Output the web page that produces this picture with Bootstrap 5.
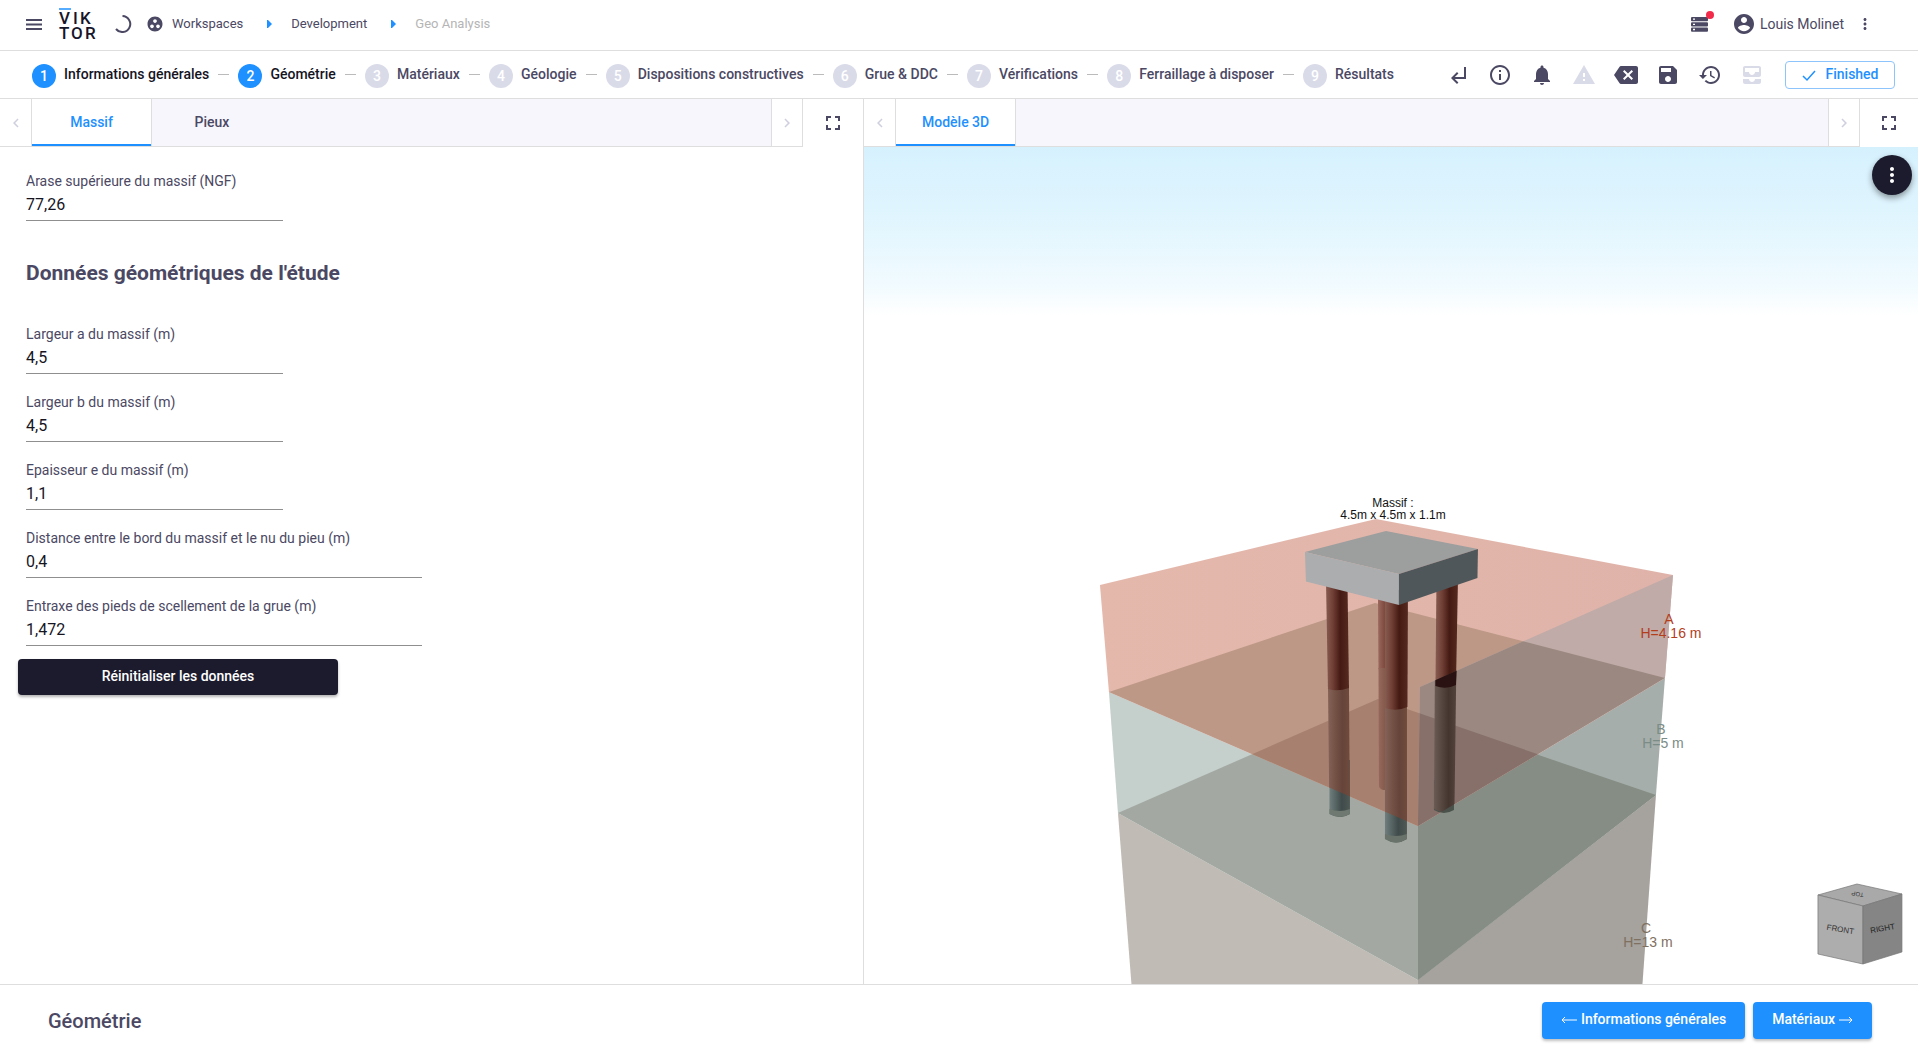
<!DOCTYPE html>
<html lang="fr">
<head>
<meta charset="utf-8">
<meta name="viewport" content="width=device-width, initial-scale=1">
<title>Geo Analysis</title>
<link href="https://cdn.jsdelivr.net/npm/bootstrap@5.3.0/dist/css/bootstrap.min.css" rel="stylesheet">
<style>
:root{--ink:#4b4863;--dark:#1c1b2e;--blue:#1e90ff;--rule:#dedede;--mute:#dadbe9;--tint:#f7f6fd}
body{font-family:Roboto,"Liberation Sans",sans-serif;font-size:14px;line-height:20px;color:var(--ink);background:#fff}
svg{flex:none;display:block}
.ic{width:24px;height:24px;fill:currentColor}
.ic-sm{width:18px;height:18px;fill:currentColor}
.plain{border:0;background:none;padding:0;color:inherit;display:flex;align-items:center;justify-content:center}
.plain:disabled{color:var(--mute)}
.topbar{height:51px;border-bottom:1px solid var(--rule);padding:0 44px 2px 25px}
.crumbs{font-size:13px;margin-left:13px}
.crumbs a{color:var(--ink);text-decoration:none}
.crumbs .current{color:#b5b5b5}
.crumb-sep{margin:0 19px 0 24px}
.user-link{color:inherit;text-decoration:none;margin-right:12px}
.alert-dot{width:8px;height:8px;background:#f22b4b;top:-6px;right:-6px}
.stepbar{height:48px;border-bottom:1px solid var(--rule);padding:0 23px 0 32px}
.steps{flex:0 1 1362px}
.steps a{color:var(--ink);text-decoration:none;font-weight:500;white-space:nowrap;margin-bottom:2px}
.steps .num{width:24px;height:24px;border-radius:50%;background:var(--mute);color:#fff;display:flex;align-items:center;justify-content:center;font-size:14px;margin-top:4px}
.steps .done .num{background:var(--blue)}
.steps .done{color:#15141f}
.steps .dash{width:11px;height:1px;background:#bbb}
.tools{gap:18px}
.btn-finish{width:110px;height:28px;padding:0;margin-left:3px;border:1px solid #8dc4fb;border-radius:4px;color:var(--blue);font-weight:500;font-size:14px}
.left-pane{flex:0 0 calc(45% + 1px);border-right:1px solid var(--rule)}
.right-pane{flex:1 1 0;min-width:0}
.tabbar{height:48px}
.tabbar .arrow{width:32px;border-right:1px solid var(--rule);border-bottom:1px solid var(--rule);color:#cfcfe0}
.tabbar .arrow.next{border-left:1px solid var(--rule)}
.tabbar .expand{width:60px}
.right-pane .expand{width:58px}
.tabstrip{background:var(--tint);border-bottom:1px solid var(--rule)}
.tabstrip a{width:120px;display:flex;align-items:center;justify-content:center;color:var(--ink);font-weight:500;text-decoration:none;padding-bottom:1px}
.tabstrip a.active{background:#fff;color:var(--blue);border-right:1px solid var(--rule);box-shadow:inset 0 -2px var(--blue)}
.form-area{padding:24px 26px}
.field{max-width:257px;height:50px;border-bottom:1px solid #8f8f8f;margin-bottom:18px}
.field.wide{max-width:396px}
.field label{display:block;line-height:20px}
.field input{display:block;width:100%;border:0;outline:0;padding:0;height:26px;font-size:16px;color:#16151f;background:none}
.section-title{font-size:21px;line-height:24px;font-weight:700;margin:0 0 39px;padding-top:22px}
.btn-reset{width:320px;height:36px;padding:0 0 2px;margin:-5px 0 0 -8px;border-radius:4px;background:var(--dark);color:#fff;font-weight:500;font-size:14px;box-shadow:0 2px 3px rgba(0,0,0,.3)}
.btn-reset:hover{background:#2c2b42;color:#fff}
.viewer{background:linear-gradient(#d6f1fe 0,#e0f5fe 70px,#f2fbff 140px,#fff 168px)}
.fab{top:8px;right:6px;width:40px;height:40px;border-radius:50%;background:var(--dark);color:#fff;box-shadow:0 3px 6px rgba(0,0,0,.4)}
.scene{width:100%;height:100%;position:absolute;inset:0}
.scene text{font-family:"Liberation Sans",Arial,sans-serif;text-anchor:middle}
.footbar{height:70px;border-top:1px solid var(--rule);padding:6px 46px 4px 48px}
.footbar h2{font-size:20px;line-height:24px;font-weight:500}
.btn-step{height:37px;padding:0 18px 2px;border-radius:4px;background:var(--blue);color:#fff;font-weight:500;font-size:14px;box-shadow:0 2px 3px rgba(0,0,0,.25)}
.btn-step:hover{background:#1580ea;color:#fff}
</style>
</head>
<body class="d-flex flex-column vh-100 overflow-hidden">
<header class="topbar d-flex align-items-center">
  <button class="plain" aria-label="Menu"><svg width="18" height="12" viewBox="0 0 18 12" fill="#4b4863"><path d="M1 1h16v2H1zM1 5.500h16v2H1zM1 10h16v2H1z"/></svg></button>
  <a href="#" class="ms-3" aria-label="VIKTOR"><svg width="40" height="38" viewBox="0 0 40 38">
    <g font-family="Roboto, sans-serif" font-size="17" font-weight="500" fill="#16152a"><text x="0 14 21" y="19">VIK</text><text x="0 12 26" y="34">TOR</text></g>
    <path d="M0 4h12" stroke="#1e90ff" stroke-width="1.500"/></svg></a>
  <svg class="ms-3" width="18" height="18" viewBox="0 0 18 18" fill="none" stroke="#4b4863" stroke-width="2" role="status"><path d="M7.500 1A8 8 0 1 1 1 14"/></svg>
  <nav class="crumbs d-flex align-items-center" aria-label="Fil d'Ariane">
    <a href="#" class="d-flex align-items-center gap-2"><svg class="ic-sm" viewBox="0 0 24 24"><path d="M12 2C6.480 2 2 6.480 2 12s4.480 10 10 10 10-4.480 10-10S17.520 2 12 2zM8 17.500c-1.380 0-2.500-1.120-2.500-2.500s1.120-2.500 2.500-2.500 2.500 1.120 2.500 2.500-1.120 2.500-2.500 2.500zM9.500 8c0-1.380 1.120-2.500 2.500-2.500s2.500 1.120 2.500 2.500-1.120 2.500-2.500 2.500S9.500 9.380 9.500 8zm6.500 9.500c-1.380 0-2.500-1.120-2.500-2.500s1.120-2.500 2.500-2.500 2.500 1.120 2.500 2.500-1.120 2.500-2.500 2.500z"/></svg>Workspaces</a>
    <svg class="crumb-sep" width="5" height="8" viewBox="0 0 5 8"><path d="M0 0h1l4 4-4 4H0z" fill="#1e90ff"/></svg>
    <a href="#">Development</a>
    <svg class="crumb-sep" width="5" height="8" viewBox="0 0 5 8"><path d="M0 0h1l4 4-4 4H0z" fill="#1e90ff"/></svg>
    <span class="current">Geo Analysis</span>
  </nav>
  <div class="ms-auto d-flex align-items-center">
    <button class="plain position-relative me-4" aria-label="Tâches"><svg width="17" height="15" viewBox="0 0 17 15"><g fill="#4b4863"><rect width="17" height="4.300" rx="1"/><rect y="5.200" width="17" height="4.300" rx="1"/><rect y="10.400" width="17" height="4.300" rx="1"/></g><path d="M2 2.100h2M2 7.300h2M2 12.500h2" stroke="#fff" stroke-width="1.300"/></svg><span class="alert-dot rounded-circle position-absolute"></span></button>
    <a href="#" class="user-link d-flex align-items-center gap-1"><svg class="ic" viewBox="0 0 24 24"><path d="M12 2C6.480 2 2 6.480 2 12s4.480 10 10 10 10-4.480 10-10S17.520 2 12 2zm0 3c1.660 0 3 1.340 3 3s-1.340 3-3 3-3-1.340-3-3 1.340-3 3-3zm0 14.200c-2.500 0-4.710-1.280-6-3.220.03-1.990 4-3.080 6-3.080 1.990 0 5.970 1.090 6 3.080-1.290 1.940-3.500 3.220-6 3.220z"/></svg><span>Louis Molinet</span></a>
    <button class="plain" aria-label="Plus"><svg class="ic-sm" viewBox="0 0 24 24"><path d="M12 8c1.100 0 2-.9 2-2s-.9-2-2-2-2 .9-2 2 .9 2 2 2zm0 2c-1.100 0-2 .9-2 2s.9 2 2 2 2-.9 2-2-.9-2-2-2zm0 6c-1.100 0-2 .9-2 2s.9 2 2 2 2-.9 2-2-.9-2-2-2z"/></svg></button>
  </div>
</header>

<div class="stepbar d-flex align-items-center justify-content-between">
  <nav class="steps d-flex align-items-center justify-content-between" aria-label="Étapes">
    <a href="#" class="done d-flex align-items-center gap-2"><span class="num">1</span>Informations générales</a><span class="dash"></span>
    <a href="#" class="done d-flex align-items-center gap-2"><span class="num">2</span>Géométrie</a><span class="dash"></span>
    <a href="#" class="d-flex align-items-center gap-2"><span class="num">3</span>Matériaux</a><span class="dash"></span>
    <a href="#" class="d-flex align-items-center gap-2"><span class="num">4</span>Géologie</a><span class="dash"></span>
    <a href="#" class="d-flex align-items-center gap-2"><span class="num">5</span>Dispositions constructives</a><span class="dash"></span>
    <a href="#" class="d-flex align-items-center gap-2"><span class="num">6</span>Grue &amp; DDC</a><span class="dash"></span>
    <a href="#" class="d-flex align-items-center gap-2"><span class="num">7</span>Vérifications</a><span class="dash"></span>
    <a href="#" class="d-flex align-items-center gap-2"><span class="num">8</span>Ferraillage à disposer</a><span class="dash"></span>
    <a href="#" class="d-flex align-items-center gap-2"><span class="num">9</span>Résultats</a>
  </nav>
  <div class="tools d-flex align-items-center">
    <button class="plain" aria-label="Retour"><svg class="ic" viewBox="0 0 24 24"><path d="M11 9l1.420 1.420L8.830 14H18V4h2v12H8.830l3.590 3.580L11 21l-6-6 6-6z"/></svg></button>
    <button class="plain" aria-label="Informations"><svg class="ic" viewBox="0 0 24 24"><path d="M11 7h2v2h-2zm0 4h2v6h-2zm1-9C6.480 2 2 6.480 2 12s4.480 10 10 10 10-4.480 10-10S17.520 2 12 2zm0 18c-4.410 0-8-3.590-8-8s3.590-8 8-8 8 3.590 8 8-3.590 8-8 8z"/></svg></button>
    <button class="plain" aria-label="Notifications"><svg class="ic" viewBox="0 0 24 24"><path d="M12 22c1.100 0 2-.9 2-2h-4c0 1.100.89 2 2 2zm6-6v-5c0-3.070-1.640-5.640-4.500-6.320V4c0-.83-.67-1.500-1.500-1.500s-1.500.67-1.500 1.500v.68C7.630 5.360 6 7.920 6 11v5l-2 2v1h16v-1l-2-2z"/></svg></button>
    <button class="plain" disabled aria-label="Alertes"><svg class="ic" viewBox="0 0 24 24"><path d="M1 21h22L12 2 1 21zm12-3h-2v-2h2v2zm0-4h-2v-4h2v4z"/></svg></button>
    <button class="plain" aria-label="Effacer"><svg class="ic" viewBox="0 0 24 24"><path d="M22 3H7c-.69 0-1.230.35-1.590.88L0 12l5.410 8.110c.36.530.9.890 1.590.890h15c1.100 0 2-.9 2-2V5c0-1.100-.9-2-2-2zm-3 12.590L17.590 17 14 13.410 10.410 17 9 15.590 12.590 12 9 8.410 10.410 7 14 10.590 17.590 7 19 8.410 15.410 12 19 15.590z"/></svg></button>
    <button class="plain" aria-label="Enregistrer"><svg class="ic" viewBox="0 0 24 24"><path d="M17 3H5c-1.110 0-2 .9-2 2v14c0 1.100.89 2 2 2h14c1.100 0 2-.9 2-2V7l-4-4zm-5 16c-1.660 0-3-1.340-3-3s1.340-3 3-3 3 1.340 3 3-1.340 3-3 3zm3-10H5V5h10v4z"/></svg></button>
    <button class="plain" aria-label="Historique"><svg class="ic" viewBox="0 0 24 24"><path d="M13 3c-4.970 0-9 4.030-9 9H1l3.890 3.890.07.14L9 12H6c0-3.870 3.130-7 7-7s7 3.130 7 7-3.130 7-7 7c-1.930 0-3.680-.79-4.940-2.060l-1.420 1.420C8.270 19.990 10.510 21 13 21c4.970 0 9-4.030 9-9s-4.030-9-9-9zm-1 5v5l4.280 2.540.72-1.210-3.500-2.080V8H12z"/></svg></button>
    <button class="plain" disabled aria-label="Archives"><svg class="ic" viewBox="0 0 24 24"><path d="M19 3H5c-1.100 0-2 .9-2 2v7c0 1.100.9 2 2 2h14c1.100 0 2-.9 2-2V5c0-1.100-.9-2-2-2zm0 6h-4c0 1.620-1.380 3-3 3s-3-1.380-3-3H5V5h14v4zm-4 7h6v3c0 1.100-.9 2-2 2H5c-1.100 0-2-.9-2-2v-3h6c0 1.660 1.340 3 3 3s3-1.340 3-3z"/></svg></button>
    <button class="btn btn-finish d-flex align-items-center justify-content-center gap-2"><svg width="16" height="16" viewBox="0 0 16 16" fill="none" stroke="currentColor" stroke-width="1.500"><path d="M2 9l4 4 8-9"/></svg>Finished</button>
  </div>
</div>

<main class="d-flex flex-grow-1" style="min-height:0">
  <section class="left-pane d-flex flex-column">
    <div class="tabbar d-flex">
      <button class="plain arrow" aria-label="Précédent"><svg class="ic-sm" viewBox="0 0 24 24"><path d="M15.410 7.410L14 6l-6 6 6 6 1.410-1.410L10.830 12z"/></svg></button>
      <nav class="tabstrip d-flex flex-grow-1"><a href="#" class="active">Massif</a><a href="#">Pieux</a></nav>
      <button class="plain arrow next" aria-label="Suivant"><svg class="ic-sm" viewBox="0 0 24 24"><path d="M10 6L8.590 7.410 13.170 12l-4.580 4.590L10 18l6-6z"/></svg></button>
      <button class="plain expand" aria-label="Plein écran"><svg class="ic" viewBox="0 0 24 24"><path d="M7 14H5v5h5v-2H7v-3zm-2-4h2V7h3V5H5v5zm12 7h-3v2h5v-5h-2v3zM14 5v2h3v3h2V5h-5z"/></svg></button>
    </div>
    <form class="form-area overflow-auto flex-grow-1">
      <div class="field"><label for="arase">Arase supérieure du massif (NGF)</label><input id="arase" type="text" value="77,26"></div>
      <h3 class="section-title">Données géométriques de l'étude</h3>
      <div class="field"><label for="la">Largeur a du massif (m)</label><input id="la" type="text" value="4,5"></div>
      <div class="field"><label for="lb">Largeur b du massif (m)</label><input id="lb" type="text" value="4,5"></div>
      <div class="field"><label for="ep">Epaisseur e du massif (m)</label><input id="ep" type="text" value="1,1"></div>
      <div class="field wide"><label for="di">Distance entre le bord du massif et le nu du pieu (m)</label><input id="di" type="text" value="0,4"></div>
      <div class="field wide"><label for="en">Entraxe des pieds de scellement de la grue (m)</label><input id="en" type="text" value="1,472"></div>
      <button type="button" class="btn btn-reset">Réinitialiser les données</button>
    </form>
  </section>

  <section class="right-pane d-flex flex-column">
    <div class="tabbar d-flex">
      <button class="plain arrow" aria-label="Précédent"><svg class="ic-sm" viewBox="0 0 24 24"><path d="M15.410 7.410L14 6l-6 6 6 6 1.410-1.410L10.830 12z"/></svg></button>
      <nav class="tabstrip d-flex flex-grow-1"><a href="#" class="active">Modèle 3D</a></nav>
      <button class="plain arrow next" aria-label="Suivant"><svg class="ic-sm" viewBox="0 0 24 24"><path d="M10 6L8.590 7.410 13.170 12l-4.580 4.590L10 18l6-6z"/></svg></button>
      <button class="plain expand" aria-label="Plein écran"><svg class="ic" viewBox="0 0 24 24"><path d="M7 14H5v5h5v-2H7v-3zm-2-4h2V7h3V5H5v5zm12 7h-3v2h5v-5h-2v3zM14 5v2h3v3h2V5h-5z"/></svg></button>
    </div>
    <div class="viewer position-relative flex-grow-1 overflow-hidden">
      <svg class="scene" viewBox="864 147 1054 837" preserveAspectRatio="xMidYMax slice" role="img" aria-label="Modèle 3D du massif">
        <defs>
          <linearGradient id="pa"><stop offset="0" stop-color="#875c51"/><stop offset=".3" stop-color="#703f36"/><stop offset=".62" stop-color="#451a12"/><stop offset="1" stop-color="#552a20"/></linearGradient>
          <linearGradient id="pb"><stop offset="0" stop-color="#856257"/><stop offset=".35" stop-color="#745145"/><stop offset=".65" stop-color="#66443a"/><stop offset="1" stop-color="#6f4b3d"/></linearGradient>
          <linearGradient id="pc"><stop offset="0" stop-color="#6f7f7d"/><stop offset=".6" stop-color="#3f4b4a"/><stop offset="1" stop-color="#4f5955"/></linearGradient>
          <linearGradient id="pd"><stop offset="0" stop-color="#6a5c55"/><stop offset=".65" stop-color="#44352e"/><stop offset="1" stop-color="#53453e"/></linearGradient>
          <linearGradient id="pe"><stop offset="0" stop-color="#9c6a5f"/><stop offset=".7" stop-color="#7d483e"/></linearGradient>
          <linearGradient id="pf"><stop offset="0" stop-color="#96695b"/><stop offset="1" stop-color="#7c5345"/></linearGradient>
          <linearGradient id="ga" x1="0" x2="1"><stop offset="0" stop-color="#e5b8ac"/><stop offset="1" stop-color="#dfb3a9"/></linearGradient>
          <clipPath id="hullA"><path d="M1100 585L1376 519l297 56-8 103-247 148L1109 692z"/></clipPath>
          <clipPath id="floorA"><path d="M1109 692l266-89 290 75-247 148z"/></clipPath>
          <clipPath id="sideA"><path d="M1420 687l253-112-8 103-247 148z"/></clipPath>
        </defs>
        <path d="M1118 813l300 167v4h-286.500z" fill="#c1bbb5"/><path d="M1418 984v-4.500l238-184.500-13.500 189z" fill="#a6a29d"/>
        <path d="M1109 692l309 134v154L1118 813z" fill="#c5cfcc"/><path d="M1418 826l247-148-9 117-238 185z" fill="#a5aeab"/>
        <path d="M1118 813l260-114 40 15v266z" fill="#a3a9a2"/><path d="M1418 714l238 81-238 185z" fill="#868d84"/>
        <path d="M1100 585L1376 519l297 56-8 103-247 148L1109 692z" fill="url(#ga)"/>
        <path d="M1109 692l266-89 290 75-247 148z" fill="#bd9887"/>
        <path d="M1118 813l260-114 278 96-238 185z" fill="#a8806f" clip-path="url(#floorA)"/>
        <g clip-path="url(#sideA)"><path d="M1410 570h270v260h-270z" fill="#c0aba8"/><path d="M1109 692l266-89 290 75-247 148z" fill="#9b8981"/><path d="M1118 813l260-114 278 96-238 185z" fill="#87706a"/></g>
        <g>
          <path d="M1378 595h10v74h-9.500z" fill="url(#pe)"/><path d="M1378.500 668h10v122h-5q-4-1-4.500-4z" fill="url(#pf)"/>
          <path d="M1329.500 760h20.500v54q-10 6-20.500 0z" fill="url(#pc)"/><path d="M1329.500 809q10 4 20.500 0v5q-10 6-20.500 0z" fill="#6f7871"/>
          <path d="M1385 780h22v59q-11 7-22 0z" fill="url(#pc)"/><path d="M1385 834q11 4 22 0v5q-11 7-22 0z" fill="#6a736b"/>
          <path d="M1434 780h20v30q-10 6-20 0z" fill="#4a524b"/>
          <g clip-path="url(#hullA)">
            <path d="M1328 685h21l1 130h-20.500z" fill="url(#pb)"/><path d="M1385 700h22v140h-22z" fill="url(#pb)"/>
          </g>
          <path d="M1326 580h21.500l1.500 108q-11 4-21 1z" fill="url(#pa)"/>
          <path d="M1385 590h23l-.5 117q-11 5-22.500 1z" fill="url(#pa)"/>
          <path d="M1436.500 580h21.500l-2 105q-10 5-20.500 1z" fill="url(#pa)"/>
          <g clip-path="url(#sideA)"><path d="M1435 660h21.500l-2 149q-10 6-20.500 0z" fill="url(#pd)"/><path d="M1435.500 660h21.500l-1 25q-10 5-20.500 1z" fill="#2a1112"/></g>
        </g>
        <path d="M1305 552l81-21 92 18-79 25z" fill="#9d9e9e"/><path d="M1305 552l94 22v31l-93-23.500z" fill="#abadaf"/><path d="M1399 574l79-25-.5 29-78.500 27z" fill="#50575a"/>
        <g font-size="12" fill="#111"><text x="1393" y="507">Massif :</text><text x="1393" y="519">4.5m x 4.5m x 1.1m</text></g>
        <g font-size="14"><g fill="#b33e1c"><text x="1669" y="624">A</text><text x="1671" y="638">H=4.16 m</text></g>
        <g fill="#7b8c86"><text x="1661" y="734">B</text><text x="1663" y="748">H=5 m</text></g>
        <g fill="#7f7161"><text x="1646" y="933">C</text><text x="1648" y="947">H=13 m</text></g></g>
        <g stroke="#777" stroke-width=".7"><path d="M1818 895l39-11 45 10-39 12z" fill="#a9a9a9"/><path d="M1818 895l45 11v58l-45-10z" fill="#adadad"/><path d="M1863 906l39-12v58l-39 12z" fill="#858585"/></g>
        <g font-size="8" fill="#333"><text transform="translate(1840 932) rotate(9)">FRONT</text><text transform="translate(1883 931) rotate(-10)" fill="#222">RIGHT</text><text transform="translate(1858 892) rotate(190)" font-size="6">TOP</text></g>
      </svg>
      <button class="plain fab position-absolute" aria-label="Options"><svg class="ic" viewBox="0 0 24 24"><path d="M12 8c1.100 0 2-.9 2-2s-.9-2-2-2-2 .9-2 2 .9 2 2 2zm0 2c-1.100 0-2 .9-2 2s.9 2 2 2 2-.9 2-2-.9-2-2-2zm0 6c-1.100 0-2 .9-2 2s.9 2 2 2 2-.9 2-2-.9-2-2-2z"/></svg></button>
    </div>
  </section>
</main>

<footer class="footbar d-flex align-items-center justify-content-between">
  <h2 class="m-0">Géométrie</h2>
  <div class="d-flex gap-2">
    <button class="btn btn-step d-flex align-items-center gap-1"><svg width="16" height="8" viewBox="0 0 16 8" fill="none" stroke="#fff"><path d="M16 4H1M4 1L1 4l3 3"/></svg>Informations générales</button>
    <button class="btn btn-step d-flex align-items-center gap-1">Matériaux<svg width="14" height="8" viewBox="0 0 14 8" fill="none" stroke="#fff"><path d="M0 4h13M10 1l3 3-3 3"/></svg></button>
  </div>
</footer>
<script src="https://cdn.jsdelivr.net/npm/bootstrap@5.3.0/dist/js/bootstrap.bundle.min.js"></script>
</body>
</html>
